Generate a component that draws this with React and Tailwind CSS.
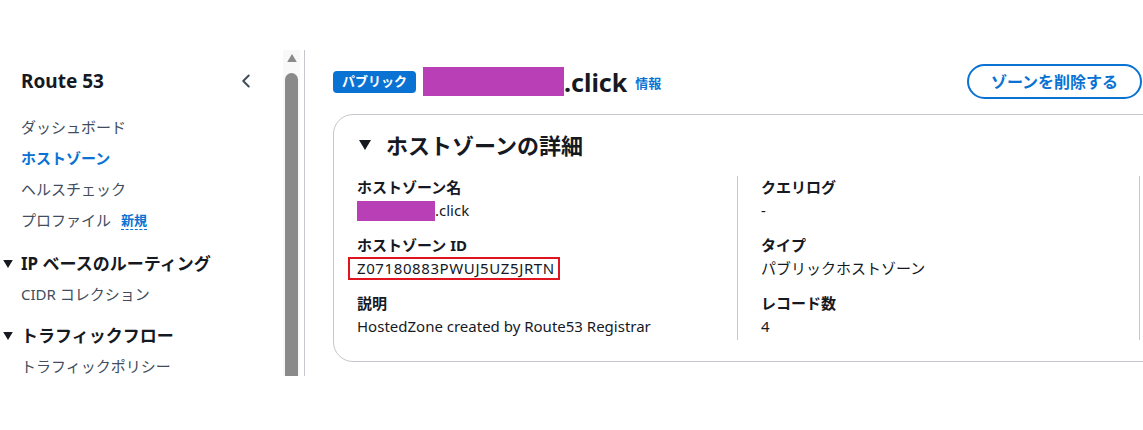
import { ChevronLeft } from 'lucide-react';

const font = { fontFamily: '"Noto Sans", "Noto Sans CJK JP", sans-serif' };

const Caret = ({ className }) => (
  <svg viewBox="0 0 12 10" className={className} fill="currentColor">
    <path d="M0 0 H12 L6 10 Z" />
  </svg>
);

const Blocked = ({ className }) => <span className={`inline-block bg-[#b83fb6] ${className}`} />;

const NavItem = ({ children, active }) => (
  <div className={`h-[31px] flex items-center text-[15px] ${active ? 'text-[#0972d3] font-bold' : 'text-[#414d5c]'}`}>
    {children}
  </div>
);

const NavSection = ({ title }) => (
  <div className="h-[30px] flex items-center -ml-[18px] text-[17px] font-bold text-[#16191f]">
    <Caret className="w-[10px] h-[8px] mr-[8px]" />
    {title}
  </div>
);

const Field = ({ label, children }) => (
  <div>
    <div className="h-[23px] leading-[23px] text-[15px] font-bold text-[#16191f]">{label}</div>
    <div className="h-[23px] leading-[23px] text-[15px] text-[#16191f] flex items-center">{children}</div>
  </div>
);

export default function App() {
  return (
    <div className="w-[1143px] h-[430px] bg-white overflow-hidden" style={font}>
      <div className="mt-[50px] h-[326px] flex">
        <aside className="w-[283px] shrink-0 pl-[21px] pt-[19px] overflow-hidden">
          <div className="h-[24px] flex items-center justify-between pr-[26px]">
            <span className="text-[19px] font-bold text-[#16191f]">Route 53</span>
            <ChevronLeft className="w-[22px] h-[22px] text-[#414d5c]" strokeWidth={2.2} />
          </div>
          <div className="mt-[19px]">
            <NavItem>ダッシュボード</NavItem>
            <NavItem active>ホストゾーン</NavItem>
            <NavItem>ヘルスチェック</NavItem>
            <NavItem>
              プロファイル
              <span className="ml-[10px] text-[13px] font-bold text-[#0972d3] border-b border-dashed border-[#0972d3] leading-[17px]">新規</span>
            </NavItem>
          </div>
          <div className="mt-[13px]">
            <NavSection title="IP ベースのルーティング" />
            <NavItem>CIDR コレクション</NavItem>
          </div>
          <div className="mt-[11px]">
            <NavSection title="トラフィックフロー" />
            <NavItem>トラフィックポリシー</NavItem>
          </div>
        </aside>
        <div className="w-[17px] shrink-0 bg-[#f8f8f8] flex flex-col items-center pt-[4px]">
          <Caret className="w-[14px] h-[8px] text-[#8a8a8a] rotate-180" />
          <div className="mt-[11px] w-[13px] flex-1 bg-[#8a8a8a] rounded-t-full" />
        </div>
        <div className="w-[4px] shrink-0" />
        <div className="w-px shrink-0 bg-[#c6c6cd]" />
        <main className="flex-1 min-w-0 pl-[28px] overflow-hidden">
          <div className="h-[64px] flex items-center justify-between pr-[1px] pb-[1px]">
            <div className="flex items-center">
              <span className="h-[22px] px-[9px] rounded-[4px] bg-[#0972d3] text-white text-[13px] font-bold flex items-center">パブリック</span>
              <Blocked className="ml-[7px] w-[141px] h-[29px]" />
              <span className="text-[25px] font-bold text-[#16191f] leading-[30px]">.click</span>
              <span className="ml-[8px] mt-[4px] text-[13px] font-bold text-[#0972d3]">情報</span>
            </div>
            <button className="h-[35px] w-[175px] rounded-full border-2 border-[#0972d3] text-[#0972d3] text-[16px] font-bold flex items-center justify-center">
              ゾーンを削除する
            </button>
          </div>
          <div className="w-[840px] h-[248px] border border-[#c6c6cd] rounded-[20px] pl-[23px] pt-[15px]">
            <div className="h-[30px] flex items-center text-[22px] font-bold text-[#16191f]">
              <Caret className="w-[12px] h-[10px] ml-[2px] mr-[15px]" />
              ホストゾーンの詳細
            </div>
            <div className="mt-[16px] flex">
              <div className="w-[381px] border-r border-[#c6c6cd] flex flex-col gap-[12px] pb-[2px]">
                <Field label="ホストゾーン名">
                  <Blocked className="w-[78px] h-[20px]" />
                  .click
                </Field>
                <Field label="ホストゾーン ID">
                  <span className="relative tracking-[0.6px]">
                    Z07180883PWUJ5UZ5JRTN
                    <span className="absolute -left-[9px] -right-[5px] top-0 h-[23px] border-2 border-[#e0141e]" />
                  </span>
                </Field>
                <Field label="説明">HostedZone created by Route53 Registrar</Field>
              </div>
              <div className="w-[402px] pl-[23px] border-r border-[#c6c6cd] flex flex-col gap-[12px]">
                <Field label="クエリログ">-</Field>
                <Field label="タイプ">パブリックホストゾーン</Field>
                <Field label="レコード数">4</Field>
              </div>
            </div>
          </div>
        </main>
      </div>
    </div>
  );
}
